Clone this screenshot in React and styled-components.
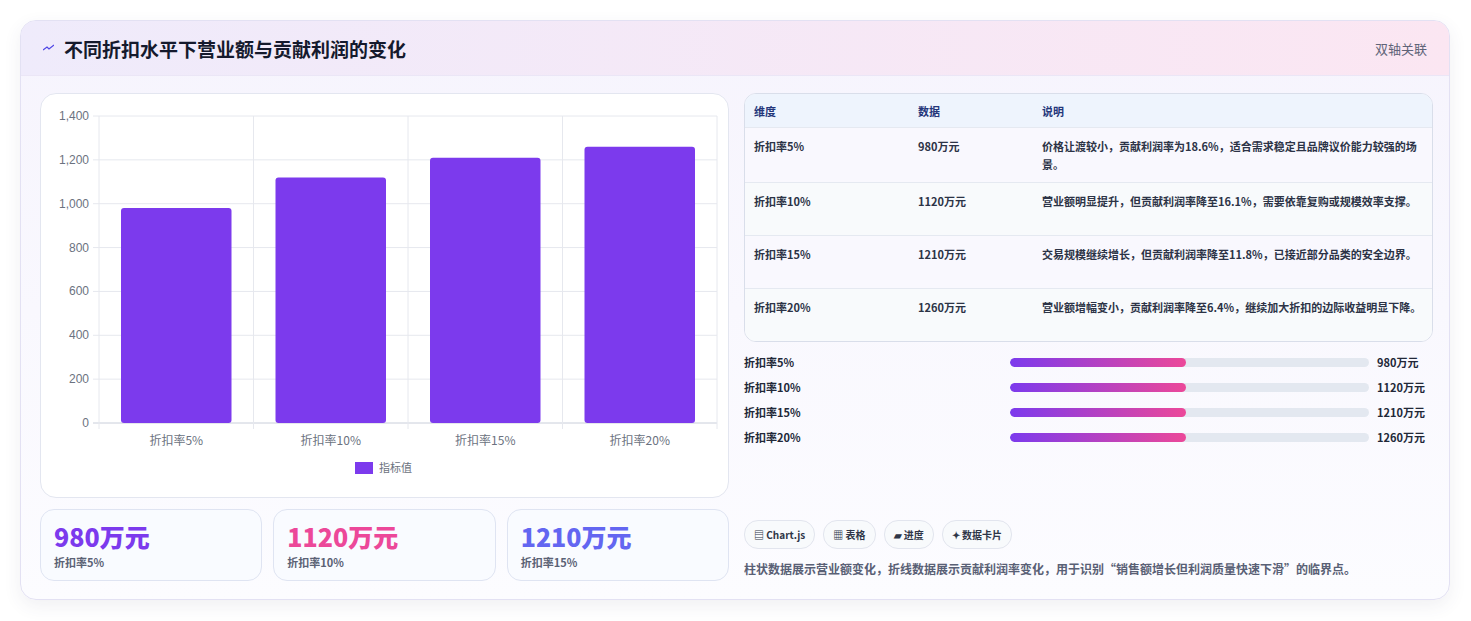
import React from 'react';
import styled, { createGlobalStyle } from 'styled-components';

const Global = createGlobalStyle`
	body {
		margin: 0;
		background: #f3f4f8;
		font-family: "Noto Sans CJK SC", "Noto Sans", sans-serif;
	}
`;

const Page = styled.div`
	padding: 20px 21px 22px 20px;
	background: #ffffff;
`;

const Card = styled.div`
	border: 1px solid #e3e1f3;
	border-radius: 16px;
	background: linear-gradient(180deg, #f6f4fd, #fcfcff);
	box-shadow: 0 6px 18px rgba(60, 60, 100, 0.08);
	overflow: hidden;
`;

const Header = styled.div`
	height: 54px;
	display: flex;
	align-items: center;
	justify-content: space-between;
	padding: 0 22px;
	background: linear-gradient(90deg, #efebfb, #fbe6f2);
	border-bottom: 1px solid #ebe6f6;
`;

const Title = styled.h1`
	margin: 0;
	font-size: 19px;
	font-weight: 700;
	color: #151a2d;
	display: flex;
	align-items: center;
	gap: 10px;
`;

const Tag = styled.span`
	font-size: 13px;
	color: #5f6478;
`;

const Body = styled.div`
	display: grid;
	grid-template-columns: 689px 689px;
	gap: 15px;
	padding: 17px 18px 18px 19px;
`;

const Col = styled.div`
	display: flex;
	flex-direction: column;
`;

const ChartBox = styled.div`
	height: 403px;
	background: #fff;
	border: 1px solid #e3e6f0;
	border-radius: 16px;
`;

const Stats = styled.div`
	display: grid;
	grid-template-columns: repeat(3, 1fr);
	gap: 11px;
	margin-top: 11px;
`;

const Stat = styled.div`
	height: 72px;
	border: 1px solid #dfe4f2;
	border-radius: 14px;
	background: #f9fbff;
	padding: 10px 13px;
	box-sizing: border-box;
`;

const StatValue = styled.div`
	font-size: 25px;
	font-weight: 800;
	color: ${p => p.color};
	line-height: 32px;
`;

const StatLabel = styled.div`
	font-size: 11px;
	font-weight: 600;
	color: #5b6275;
	margin-top: 2px;
`;

const Table = styled.div`
	border: 1px solid #d9deea;
	border-radius: 12px;
	overflow: hidden;
	background: #fff;
`;

const Row = styled.div`
	display: grid;
	grid-template-columns: 164px 124px 1fr;
	padding: ${p => (p.head ? '0 9px' : '9px 9px')};
	height: ${p => (p.head ? '33px' : 'auto')};
	min-height: ${p => (p.head ? '33px' : '53px')};
	box-sizing: border-box;
	align-items: ${p => (p.head ? 'center' : 'start')};
	background: ${p => (p.head ? '#eef4fd' : p.alt ? '#f8fafc' : '#f9f8fe')};
	border-top: ${p => (p.head ? 'none' : '1px solid #e5e9f1')};
	font-size: 11px;
	font-weight: ${p => (p.head ? 700 : 600)};
	color: ${p => (p.head ? '#24367a' : '#2c3346')};
	line-height: 18px;
`;

const Bars = styled.div`
	display: flex;
	flex-direction: column;
	gap: 7px;
	margin-top: 11px;
`;

const BarRow = styled.div`
	display: grid;
	grid-template-columns: 258px 359px 1fr;
	align-items: center;
	gap: 8px;
	font-size: 11px;
	font-weight: 700;
	color: #222838;
	height: 18px;
`;

const Track = styled.div`
	height: 9px;
	border-radius: 5px;
	background: #e3e8f0;
	overflow: hidden;
`;

const Fill = styled.div`
	height: 100%;
	border-radius: 5px;
	background: linear-gradient(90deg, #7c3aed, #ec4899);
`;

const Chips = styled.div`
	display: flex;
	gap: 8px;
	margin-top: auto;
`;

const Chip = styled.span`
	font-size: 10px;
	font-weight: 700;
	color: #2f3648;
	border: 1px solid #e2e5ee;
	background: #f8fafc;
	border-radius: 14px;
	padding: 0 9px;
	height: 27px;
	display: flex;
	align-items: center;
`;

const Note = styled.p`
	margin: 11px 0 4px;
	font-size: 12px;
	font-weight: 600;
	color: #596075;
`;

const data = [
	{ label: '折扣率5%', v: 980, desc: '价格让渡较小，贡献利润率为18.6%，适合需求稳定且品牌议价能力较强的场景。' },
	{ label: '折扣率10%', v: 1120, desc: '营业额明显提升，但贡献利润率降至16.1%，需要依靠复购或规模效率支撑。' },
	{ label: '折扣率15%', v: 1210, desc: '交易规模继续增长，但贡献利润率降至11.8%，已接近部分品类的安全边界。' },
	{ label: '折扣率20%', v: 1260, desc: '营业额增幅变小，贡献利润率降至6.4%，继续加大折扣的边际收益明显下降。' },
];

function Chart() {
	const x0 = 58, x1 = 676, y0 = 22, y1 = 329;
	const w = (x1 - x0) / 4;
	const ticks = [0, 200, 400, 600, 800, 1000, 1200, 1400];
	const yOf = v => y1 - (v / 1400) * (y1 - y0);
	return (
		<svg width="687" height="401" style={{ display: 'block' }} fontFamily="'Noto Sans CJK SC', sans-serif">
			{ticks.map(t => (
				<g key={t}>
					<line x1={x0 - 6} x2={x1} y1={yOf(t)} y2={yOf(t)} stroke={t === 0 ? '#c9ceda' : '#e6e8ee'} />
					<text x={x0 - 10} y={yOf(t) + 4} fontSize="12" fill="#6b7280" textAnchor="end" fontFamily="Liberation Sans, sans-serif">
						{t.toLocaleString('en-US')}
					</text>
				</g>
			))}
			{[0, 1, 2, 3, 4].map(i => (
				<line key={i} x1={x0 + i * w} x2={x0 + i * w} y1={y0} y2={y1 + 6} stroke="#e6e8ee" />
			))}
			{data.map((d, i) => (
				<g key={d.label}>
					<rect x={x0 + i * w + 22} y={yOf(d.v)} width={w - 44} height={y1 - yOf(d.v)} rx="3" fill="#7c3aed" />
					<text x={x0 + i * w + w / 2} y={y1 + 22} fontSize="12" fill="#6b7280" textAnchor="middle">{d.label}</text>
				</g>
			))}
			<rect x="314" y="368" width="18" height="12" fill="#7c3aed" />
			<text x="338" y="378" fontSize="11" fill="#6b7280">指标值</text>
		</svg>
	);
}

export default function App() {
	return (
		<Page>
			<Global />
			<Card>
				<Header>
					<Title>
						<svg width="11" height="8" viewBox="0 0 11 8"><path d="M0 6 L4 3 L6 5 L11 1" stroke="#4f46e5" strokeWidth="1.2" fill="none" /></svg>
						不同折扣水平下营业额与贡献利润的变化
					</Title>
					<Tag>双轴关联</Tag>
				</Header>
				<Body>
					<Col>
						<ChartBox><Chart /></ChartBox>
						<Stats>
							<Stat><StatValue color="#7c3aed">980万元</StatValue><StatLabel>折扣率5%</StatLabel></Stat>
							<Stat><StatValue color="#ec4899">1120万元</StatValue><StatLabel>折扣率10%</StatLabel></Stat>
							<Stat><StatValue color="#6366f1">1210万元</StatValue><StatLabel>折扣率15%</StatLabel></Stat>
						</Stats>
					</Col>
					<Col>
						<Table>
							<Row head><span>维度</span><span>数据</span><span>说明</span></Row>
							{data.map((d, i) => (
								<Row key={d.label} alt={i % 2 === 1}>
									<span>{d.label}</span><span>{d.v}万元</span><span>{d.desc}</span>
								</Row>
							))}
						</Table>
						<Bars>
							{data.map(d => (
								<BarRow key={d.label}>
									<span>{d.label}</span>
									<Track><Fill style={{ width: '49%' }} /></Track>
									<span>{d.v}万元</span>
								</BarRow>
							))}
						</Bars>
						<Chips>
							<Chip>▤ Chart.js</Chip>
							<Chip>▦ 表格</Chip>
							<Chip>▰ 进度</Chip>
							<Chip>✦ 数据卡片</Chip>
						</Chips>
						<Note>柱状数据展示营业额变化，折线数据展示贡献利润率变化，用于识别“销售额增长但利润质量快速下滑”的临界点。</Note>
					</Col>
				</Body>
			</Card>
		</Page>
	);
}
